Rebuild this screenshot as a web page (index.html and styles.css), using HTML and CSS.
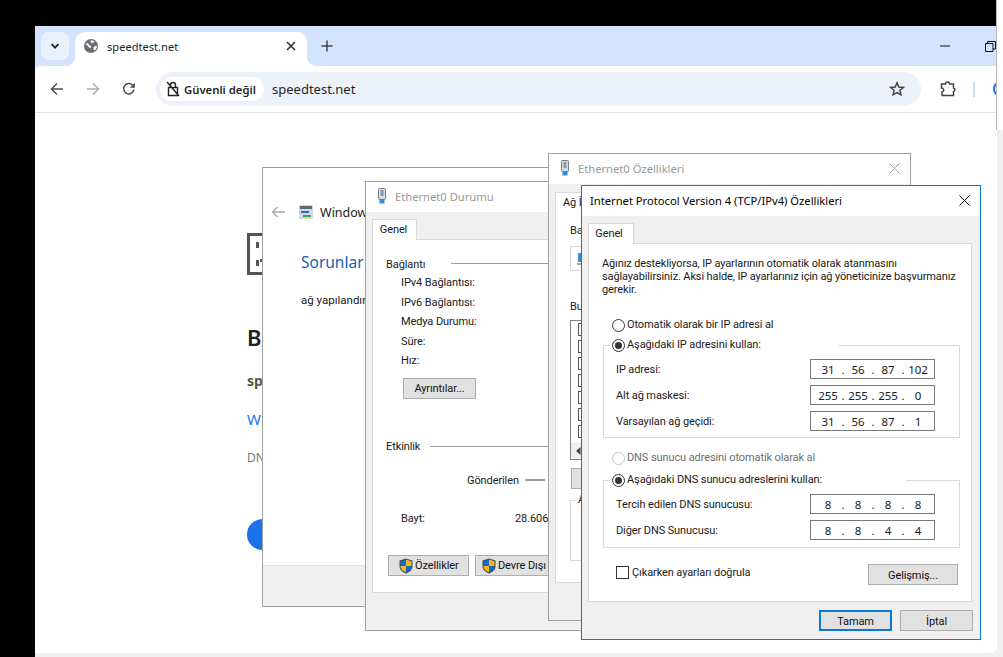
FILE: index.html
```html
<!DOCTYPE html>
<html lang="tr">
<head>
<meta charset="utf-8">
<title>speedtest.net</title>
<link rel="stylesheet" href="styles.css">
</head>
<body>
<div class="left-black"></div>
<div class="main">
  <div class="top-black"></div>
  <div class="tabstrip">
    <div class="tab-menu">
      <svg width="12" height="12" viewBox="0 0 12 12"><path d="M2.5 4.2 6 7.7l3.5-3.5" fill="none" stroke="#1f1f1f" stroke-width="1.7"/></svg>
    </div>
    <div class="tab">
      <svg width="14" height="14" viewBox="0 0 14 14"><circle cx="7" cy="7" r="7" fill="#6b6e72"/><path d="M1.5 5 4 4l1 2 2 1v2L5 8.5 4 7zM7 1.2 10.500 2 9 4H7.500L6.500 3zM9.500 8l3-1.500.3 2L11 11.500 9.500 10.500z" fill="#fff"/></svg>
      <span class="tab-title">speedtest.net</span>
      <svg class="tab-close" width="10" height="10" viewBox="0 0 10 10"><path d="M1 1l8 8M9 1l-8 8" stroke="#303134" stroke-width="1.6"/></svg>
    </div>
    <svg class="tab-new" width="12" height="12" viewBox="0 0 12 12"><path d="M6 .5v11M.5 6h11" stroke="#444" stroke-width="1.5"/></svg>
    <div class="win-ctrls">
      <svg width="11" height="2" viewBox="0 0 11 2"><path d="M1 1h10" stroke="#111" stroke-width="1"/></svg>
      <svg width="11" height="11" viewBox="0 0 11 11"><path d="M.5 2.500h7.500v8H.5zM2.500 2.500V.5h8v7.500H8" fill="none" stroke="#111"/></svg>
    </div>
  </div>
  <div class="toolbar">
    <svg class="tb-ic" width="14" height="14" viewBox="0 0 14 14"><path d="M13 7H2M7 1.500 1.500 7 7 12.500" fill="none" stroke="#4a4c50" stroke-width="1.500"/></svg>
    <svg class="tb-ic" width="14" height="14" viewBox="0 0 14 14"><path d="M1 7h11M7 1.500 12.500 7 7 12.500" fill="none" stroke="#acaeb1" stroke-width="1.500"/></svg>
    <svg class="tb-ic" width="14" height="14" viewBox="0 0 14 14"><path d="M12 7.500A5.200 5.200 0 1 1 10.500 3L12 4.500" fill="none" stroke="#4a4c50" stroke-width="1.500"/><path d="M12.800 .8v5h-5z" fill="#4a4c50"/></svg>
    <div class="omnibox">
      <div class="chip">
        <svg width="14" height="16" viewBox="0 0 14 16"><path d="M2.500 6.500h9v8h-9zM4.500 6.500V4a2.500 2.500 0 0 1 5 0v2.500M1 1l12 14" fill="none" stroke="#222" stroke-width="1.400"/></svg>
        <span class="chip-text">Güvenli değil</span>
      </div>
      <span class="url">speedtest.net</span>
      <svg class="star" width="16" height="16" viewBox="0 0 16 16"><path d="M8 1.800 9.800 6l4.500.4-3.400 3 1 4.400L8 11.500l-3.900 2.300 1-4.400-3.400-3L6.200 6z" fill="none" stroke="#444" stroke-width="1.500"/></svg>
    </div>
    <svg class="ext" width="16" height="16" viewBox="0 0 16 16"><path d="M1.500 3h4a2 2 0 0 1 4 0h4v4a1.800 1.800 0 0 1 0 3.500V14.500H2V11a2 2 0 0 0 1-3.500 2 2 0 0 0-1.500-.5z" fill="none" stroke="#444" stroke-width="1.500"/></svg>
    <div class="tb-sep"></div>
    <div class="avatar"></div>
  </div>
  <div class="page">
    <svg class="err-ic" width="40" height="42" viewBox="0 0 40 42"><rect x="1.500" y="1.500" width="37" height="39" fill="none" stroke="#555" stroke-width="3"/><path d="M9 9h3v6H9zM9 27h3v6H9zM13 26h3v3h-3z" fill="#555"/></svg>
    <h1 class="err-h">Bu siteye ulaşılamıyor</h1>
    <p class="err-host">speedtest.net</p>
    <p class="err-link">Windows Ağ Tanılama</p>
    <p class="err-code">DNS_PROBE_POSSIBLE</p>
    <div class="err-btn">Yeniden yükle</div>
  </div>
</div>
<div class="strip"></div>

<section class="win win-a">
  <div class="a-head">
    <svg width="14" height="12" viewBox="0 0 14 12"><path d="M14 6H1.500M6.500 1 1.500 6l5 5" fill="none" stroke="#a6a6a6" stroke-width="1.300"/></svg>
    <svg class="a-ic" width="14" height="14" viewBox="0 0 14 14"><rect width="14" height="14" fill="#d8d8d8"/><rect x="1" y="1" width="12" height="3" fill="#5a6a78"/><path d="M2 6h8v2H2z" fill="#1f6fc8"/><path d="M4 10h8v2H4z" fill="#3fa34d"/></svg>
    <span>Windows Ağ Tanılama</span>
  </div>
  <div class="a-title">Sorunlar algılandı</div>
  <div class="a-text">ağ yapılandırması</div>
  <div class="a-foot"></div>
</section>

<section class="win win-b">
  <header class="win-title inactive">
    <svg class="nic" width="8" height="16" viewBox="0 0 8 16"><rect x=".5" y=".5" width="7" height="11" rx="1" fill="#d5dde3" stroke="#6d7f8f"/><rect x="2.500" y="2" width="3" height="6" fill="#8a9aa6"/><rect x="1.500" y="11.500" width="5" height="4" fill="#2f8fd8"/></svg>
    <span>Ethernet0 Durumu</span>
  </header>
  <div class="tabs"><div class="w-tab">Genel</div></div>
  <div class="panel b-panel">
    <div class="sec b-first"><span>Bağlantı</span><i class="sec-line"></i></div>
    <div class="b-rows">
      <div>IPv4 Bağlantısı:</div>
      <div>IPv6 Bağlantısı:</div>
      <div>Medya Durumu:</div>
      <div>Süre:</div>
      <div>Hız:</div>
    </div>
    <div class="btn b-details">Ayrıntılar...</div>
    <div class="sec b-act"><span>Etkinlik</span><i class="sec-line"></i></div>
    <div class="b-sent"><span>Gönderilen</span><i class="b-dash"></i></div>
    <div class="b-bytes"><span class="b-bytes-label">Bayt:</span><span>28.606</span></div>
    <div class="b-btns">
      <div class="btn b-prop">
        <svg class="shield" width="14" height="16" viewBox="0 0 14 16"><path d="M7 .5 13.500 2.500V8c0 4-3 6-6.500 7.500C3.500 14 .5 12 .5 8V2.500z" fill="#3a4a5a"/><path d="M7 1.500V8H1.500V3.200z" fill="#1569c7"/><path d="M7 1.500 12.500 3.200V8H7z" fill="#f9b81f"/><path d="M1.500 8H7v6.200C4 13 1.500 11.500 1.500 8z" fill="#f9b81f"/><path d="M7 8h5.500c0 3.500-2.500 5-5.500 6.200z" fill="#1569c7"/></svg>
        <span>Özellikler</span>
      </div>
      <div class="btn b-dis">
        <svg class="shield" width="14" height="16" viewBox="0 0 14 16"><path d="M7 .5 13.500 2.500V8c0 4-3 6-6.500 7.500C3.500 14 .5 12 .5 8V2.500z" fill="#3a4a5a"/><path d="M7 1.500V8H1.500V3.200z" fill="#1569c7"/><path d="M7 1.500 12.500 3.200V8H7z" fill="#f9b81f"/><path d="M1.500 8H7v6.200C4 13 1.500 11.500 1.500 8z" fill="#f9b81f"/><path d="M7 8h5.500c0 3.500-2.500 5-5.500 6.200z" fill="#1569c7"/></svg>
        <span>Devre Dışı Bırak</span>
      </div>
    </div>
  </div>
</section>

<section class="win win-c">
  <header class="win-title inactive">
    <svg class="nic" width="8" height="16" viewBox="0 0 8 16"><rect x=".5" y=".5" width="7" height="11" rx="1" fill="#d5dde3" stroke="#6d7f8f"/><rect x="2.500" y="2" width="3" height="6" fill="#8a9aa6"/><rect x="1.500" y="11.500" width="5" height="4" fill="#2f8fd8"/></svg>
    <span>Ethernet0 Özellikleri</span>
    <svg class="close" width="11" height="11" viewBox="0 0 11 11"><path d="M.5.500l10 10M10.500.500l-10 10" stroke="#a8a8a8"/></svg>
  </header>
  <div class="tabs"><div class="w-tab c-tab">Ağ İşlemleri</div></div>
  <div class="panel c-panel">
    <div class="c-ba">Bağlanma</div>
    <div class="c-box"><svg width="14" height="14" viewBox="0 0 14 14"><rect x="2" y="1" width="10" height="9" fill="#3f8fd8"/><rect x="1" y="11" width="12" height="2" fill="#9aa"/></svg></div>
    <div class="c-bu">Bu bağlantı</div>
    <div class="c-list">
      <i class="c-check"></i><i class="c-check"></i><i class="c-check"></i><i class="c-check"></i><i class="c-check"></i><i class="c-check"></i><i class="c-check"></i>
      <div class="c-scroll"><svg width="5" height="8" viewBox="0 0 5 8"><path d="M4.500 0v8L0 4z" fill="#444"/></svg></div>
    </div>
    <div class="btn c-btn">Yükle</div>
    <fieldset class="c-group"><legend class="c-legend">Açıklama</legend></fieldset>
  </div>
</section>

<section class="win win-d">
  <header class="win-title">
    <span>Internet Protocol Version 4 (TCP/IPv4) Özellikleri</span>
    <svg class="close" width="11" height="11" viewBox="0 0 11 11"><path d="M.5.500l10 10M10.500.500l-10 10" stroke="#111"/></svg>
  </header>
  <div class="tabs"><div class="w-tab d-tab">Genel</div></div>
  <div class="panel d-panel">
    <p class="d-intro">Ağınız destekliyorsa, IP ayarlarının otomatik olarak atanmasını<br>sağlayabilirsiniz. Aksi halde, IP ayarlarınız için ağ yöneticinize başvurmanız<br>gerekir.</p>
    <div class="radio d-r1"><i class="dot"></i>Otomatik olarak bir IP adresi al</div>
    <fieldset class="group">
      <legend class="d-legend l1"><span class="radio"><i class="dot on"></i>Aşağıdaki IP adresini kullan:</span></legend>
      <div class="field"><span>IP adresi:</span><div class="ip"><b>31</b><u>.</u><b>56</b><u>.</u><b>87</b><u>.</u><b>102</b></div></div>
      <div class="field"><span>Alt ağ maskesi:</span><div class="ip"><b>255</b><u>.</u><b>255</b><u>.</u><b>255</b><u>.</u><b>0</b></div></div>
      <div class="field"><span>Varsayılan ağ geçidi:</span><div class="ip"><b>31</b><u>.</u><b>56</b><u>.</u><b>87</b><u>.</u><b>1</b></div></div>
    </fieldset>
    <div class="radio d-r3 off"><i class="dot"></i>DNS sunucu adresini otomatik olarak al</div>
    <fieldset class="group d-g2">
      <legend class="d-legend l2"><span class="radio"><i class="dot on"></i>Aşağıdaki DNS sunucu adreslerini kullan:</span></legend>
      <div class="field"><span>Tercih edilen DNS sunucusu:</span><div class="ip"><b>8</b><u>.</u><b>8</b><u>.</u><b>8</b><u>.</u><b>8</b></div></div>
      <div class="field"><span>Diğer DNS Sunucusu:</span><div class="ip"><b>8</b><u>.</u><b>8</b><u>.</u><b>4</b><u>.</u><b>4</b></div></div>
    </fieldset>
    <div class="d-check-row">
      <div class="check"><i class="box"></i>Çıkarken ayarları doğrula</div>
      <div class="btn d-adv">Gelişmiş...</div>
    </div>
  </div>
  <div class="d-actions">
    <div class="btn d-ok">Tamam</div>
    <div class="btn d-cancel">İptal</div>
  </div>
</section>
</body>
</html>
```
FILE: styles.css
```css
* { box-sizing: border-box; }
html, body { margin: 0; padding: 0; }
body {
  position: relative;
  width: 1003px;
  height: 657px;
  overflow: hidden;
  display: flex;
  background: #f0f0f0;
  font-family: Roboto, "Noto Sans", sans-serif;
  font-size: 11px;
  letter-spacing: -0.1px;
  color: #1a1a1a;
}
.left-black { width: 35px; height: 657px; background: #000; }
.main { width: 961px; height: 653px; display: flex; flex-direction: column; }
.strip { width: 7px; height: 130px; background: #fff; border-left: 1px solid #b9b9b9; }
.top-black { height: 26px; background: #000; }

/* browser chrome */
.tabstrip {
  height: 40px;
  background: #d3e3fd;
  display: flex;
  align-items: flex-start;
  padding: 6px 0 0 6px;
  position: relative;
}
.tab-menu {
  width: 28px; height: 28px;
  border-radius: 8px;
  background: #e9f1fd;
  display: flex; align-items: center; justify-content: center;
}
.tab {
  margin-left: 6px;
  width: 232px; height: 34px;
  background: #fff;
  border-radius: 10px 10px 0 0;
  display: flex; align-items: center;
  padding: 0 11px 6px 9px;
  position: relative;
}
.tab::before, .tab::after {
  content: "";
  position: absolute;
  bottom: 0;
  width: 10px; height: 10px;
}
.tab::before { left: -10px; background: radial-gradient(circle at 0 0, transparent 10px, #fff 10.500px); }
.tab::after { right: -10px; background: radial-gradient(circle at 100% 0, transparent 10px, #fff 10.500px); }
.tab-title { margin-left: 9px; flex: 1; font-family: "Noto Sans", sans-serif; font-size: 11.100px; letter-spacing: 0; color: #1f1f1f; }
.tab-new { margin: 8px 0 0 14px; }
.win-ctrls {
  margin-left: auto;
  display: flex; align-items: center; gap: 35px;
  height: 28px;
}
.toolbar {
  flex: none;
  height: 47px;
  background: #fff;
  border-radius: 8px 0 0 0;
  border-bottom: 1px solid #e2e2e2;
  overflow: hidden;
  display: flex; align-items: center;
  padding-left: 15px;
  position: relative;
}
.tb-ic { margin-right: 22px; flex: none; }
.omnibox {
  flex: none;
  width: 765px; height: 34px;
  margin-left: -2px;
  border-radius: 17px;
  background: #edf2fa;
  display: flex; align-items: center;
  padding: 0 16px 0 4px;
}
.chip {
  width: 104px; height: 24px;
  border-radius: 12px;
  background: #fff;
  display: flex; align-items: center;
  padding-left: 6px;
  gap: 4px;
  flex: none;
}
.chip-text { font-family: "Noto Sans", sans-serif; font-size: 11.300px; font-weight: 600; letter-spacing: 0; color: #1f1f1f; white-space: nowrap; }
.url { margin-left: 8px; font-family: "Noto Sans", sans-serif; font-size: 13px; letter-spacing: 0; color: #1f1f1f; flex: 1; }
.ext { margin-left: 19px; flex: none; }
.tb-sep { width: 2px; height: 15px; margin-left: 17px; background: #c7dcfb; flex: none; }
.avatar {
  width: 16px; height: 16px; margin-left: 18px;
  border: 2px solid #1a73e8; border-radius: 50%;
  flex: none;
}

/* page */
.page {
  flex: 1;
  width: 962px;
  background: #fff;
  border-radius: 0 0 6px 0;
  padding: 120px 0 0 212px;
  overflow: hidden;
  font-family: "Noto Sans", sans-serif;
  letter-spacing: 0;
}
.err-ic { display: block; }
.err-h { margin: 47px 0 0; font-size: 22px; line-height: 30px; font-weight: 600; color: #202124; }
.err-host { margin: 19px 0 0; font-size: 14px; line-height: 20px; font-weight: 700; color: #555; }
.err-link { margin: 18px 0 0; font-size: 15px; line-height: 20px; color: #1a73e8; }
.err-code { margin: 19px 0 0; font-size: 12px; line-height: 20px; color: #777; }
.err-btn {
  margin-top: 51px;
  width: 130px; height: 31px;
  border-radius: 16px;
  background: #1a73e8;
  color: #fff;
  padding: 6px 20px;
}

/* windows on the desktop */
.win {
  position: absolute;
  z-index: 0;
  display: flex; flex-direction: column;
  background: #f0f0f0;
  border: 1px solid #a0a0a0;
  white-space: nowrap;
}
.win-a { left: 262px; top: 167px; width: 300px; height: 440px; background: #fff; }
.win-b { left: 365px; top: 181px; width: 300px; height: 450px; }
.win-c { left: 548px; top: 153px; width: 363px; height: 468px; }
.win-d { left: 581px; top: 185px; width: 400px; height: 455px; border-color: #0a78d4; }

.a-head { margin-top: 34px; height: 20px; display: flex; align-items: center; padding-left: 8px; font-family: "Noto Sans", sans-serif; font-size: 12.500px; letter-spacing: 0; color: #222; }
.a-ic { margin: 0 7px 0 14px; }
.a-title { margin: 29px 0 0 38px; font-family: "Noto Sans", sans-serif; font-size: 15.500px; letter-spacing: 0; line-height: 22px; color: #1a5fb4; }
.a-text { margin: 17px 0 0 38px; line-height: 20px; font-size: 11.500px; letter-spacing: 0; }
.a-foot { margin-top: auto; height: 41px; background: #f0f0f0; border-top: 1px solid #e0e0e0; }

.win-title {
  height: 30px; flex: none;
  background: #fff;
  display: flex; align-items: center;
  padding: 0 0 2px 8px;
  font-family: "Noto Sans", sans-serif;
  font-size: 11.200px;
  letter-spacing: 0;
  color: #000;
}
.win-title.inactive { color: #999; padding-left: 12px; }
.nic { margin-right: 9px; }
.close { margin-left: auto; }
.win-c .close { margin-right: 10px; }
.win-d .close { margin-right: 10px; }

.tabs { display: flex; padding: 7px 0 0 6px; height: 28px; flex: none; position: relative; z-index: 1; margin-bottom: -1px; }
.w-tab {
  width: 45px; height: 21px;
  background: #fff;
  border: 1px solid #d9d9d9;
  border-bottom: 0;
  display: flex; align-items: center; justify-content: center;
  padding: 0 2px 1px 0;
}
.panel { background: #fff; border: 1px solid #d9d9d9; flex: 1; }
.btn {
  background: #e1e1e1;
  border: 1px solid #adadad;
  height: 21px;
  display: flex; align-items: center; justify-content: center;
  color: #111;
}

/* Ethernet0 Durumu */
.b-panel { margin: 0 -20px 37px 6px; padding-left: 13px; }
.sec { height: 20px; display: flex; align-items: center; gap: 10px; }
.sec-line { flex: 1; height: 1px; background: #a0a0a0; }
.b-first { margin-top: 13px; gap: 26px; }
.b-first span { padding-top: 2px; }
.b-rows div { height: 19.500px; line-height: 19.500px; }
.b-rows { margin-left: 15px; }
.b-details { width: 73px; margin: 7.500px 0 0 17px; }
.b-act { margin-top: 37px; }
.b-sent { height: 20px; margin: 14px 0 0 81px; display: flex; align-items: center; }
.b-sent span { width: 58px; }
.b-dash { width: 20px; height: 2px; background: #a0a0a0; }
.b-bytes { height: 20px; margin: 18px 0 0 15px; display: flex; align-items: center; }
.b-bytes-label { width: 114px; }
.b-btns { margin: 27px 0 0 2px; display: flex; gap: 6px; }
.b-prop { width: 81px; justify-content: flex-start; padding-left: 10px; }
.b-dis { width: 110px; justify-content: flex-start; padding-left: 6px; }
.shield { margin-right: 2px; }

/* Ethernet0 Ozellikleri */
.c-tab { width: 60px; justify-content: flex-start; padding-left: 7px; }
.win-c .tabs { padding-top: 8px; height: 29px; }
.c-panel { margin: 0 7px 37px 6px; padding-left: 14px; }
.c-ba { height: 20px; margin-top: 8px; line-height: 20px; }
.c-box { height: 25px; margin: 5px 40px 0 0; border: 1px solid #d9d9d9; padding: 5px 0 0 5px; }
.c-bu { height: 20px; margin-top: 26px; line-height: 20px; }
.c-list {
  height: 140px; margin: 3px 40px 0 0;
  border: 1px solid #828282;
  padding: 2px 0 0 7px;
  position: relative;
}
.c-check { display: block; width: 13px; height: 13px; border: 1px solid #555; margin: 0 0 4px; background: #fff; }
.c-scroll {
  position: absolute; left: 0; right: 0; bottom: 0;
  height: 16px; background: #f0f0f0;
  padding-left: 5px; display: flex; align-items: center;
}
.c-btn { width: 70px; margin: 8px 0 0 1px; }
.c-group { margin: 4px 40px 0 0; height: 68px; border: 1px solid #d9d9d9; padding: 0; min-width: 0; }
.c-legend { margin-left: 5px; padding: 0 2px; line-height: 14px; }

/* IPv4 dialog */
.d-tab { width: 46px; padding-right: 4px; }
.d-panel { margin: 0 8px 0 6px; padding-left: 13px; height: 359px; flex: none; }
.d-intro { margin: 12.500px 0 0; line-height: 13px; letter-spacing: -0.12px; }
.radio { display: flex; align-items: center; gap: 2px; height: 14px; line-height: 14px; }
.dot {
  width: 13px; height: 13px; border-radius: 50%;
  border: 1px solid #333;
  background: #fff;
  position: relative;
  flex: none;
}
.dot.on::after {
  content: "";
  position: absolute; left: 2px; top: 2px;
  width: 7px; height: 7px;
  border-radius: 50%;
  background: #333;
}
.d-r1 { margin: 22.500px 0 0 10px; }
.d-r3 { margin: 13px 0 0 10px; color: #6d6d6d; }
.d-r3 .dot { border-color: #c4c4c4; }
.group {
  margin: 6px 0 0 1px;
  width: 357px;
  border: 1px solid #d9d9d9;
  padding: 7px 24px 6px 12px;
  min-width: 0;
}
.d-g2 { margin-top: 8px; padding-bottom: 7px; }
.d-legend { margin-left: -6px; padding: 0 0 0 2px; height: 14px; }
.l1 { width: 229px; }
.l2 { width: 296px; }
.field { height: 20px; display: flex; align-items: center; justify-content: space-between; }
.field + .field { margin-top: 6px; }
.ip {
  width: 125px; height: 20px;
  border: 1px solid #7a7a7a;
  background: #fff;
  display: grid;
  grid-template-columns: 24px 6px 24px 6px 24px 6px 24px;
  align-items: center;
  padding-left: 5px;
  font-family: "Noto Sans", sans-serif;
  font-size: 11.500px;
  letter-spacing: 0;
}
.ip b, .ip u { font-weight: 400; text-decoration: none; text-align: center; }
.d-check-row { display: flex; justify-content: space-between; align-items: flex-start; margin: 17px 13px 0 14px; }
.check { display: flex; align-items: center; gap: 3px; height: 14px; }
.box { width: 13px; height: 13px; border: 1px solid #333; background: #fff; }
.d-adv { width: 90px; margin-top: -1px; padding-top: 2px; }
.d-actions { display: flex; justify-content: flex-end; gap: 8px; padding: 8px 7px 0 0; }
.d-ok, .d-cancel { width: 73px; padding-top: 1px; }
.d-ok { border: 2px solid #0a78d4; }
```
